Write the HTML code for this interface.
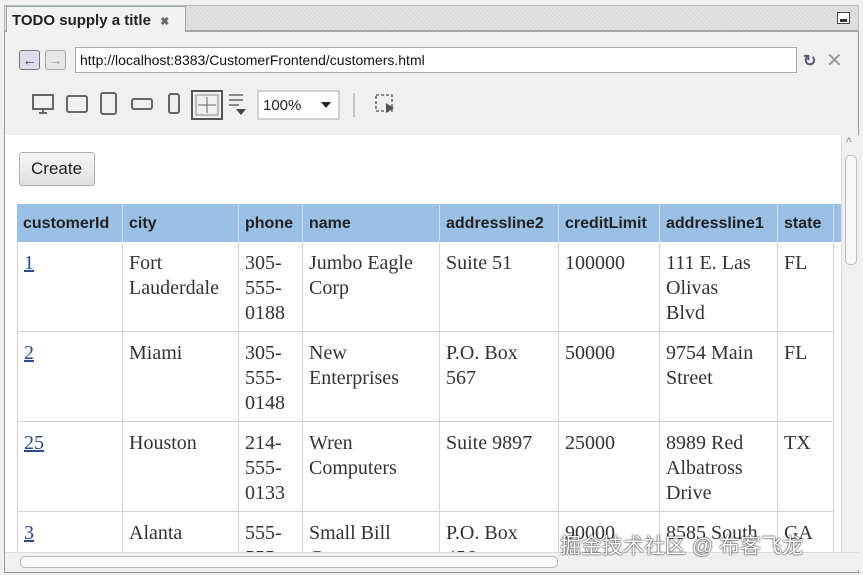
<!DOCTYPE html>
<html><head><meta charset="utf-8"><style>
*{box-sizing:border-box;margin:0;padding:0}
html{overflow:hidden;width:863px;height:575px}
body{width:863px;height:575px;overflow:hidden;background:#f0f0f0;position:relative;font-family:"Liberation Sans",sans-serif}
.abs{position:absolute}
.tabbar{left:4px;top:5px;width:855px;height:27px;background:repeating-linear-gradient(45deg,#d6d6d6 0 1px,#e2e2e2 1px 3px);border:1px solid #b8b8b8;border-bottom:2px solid #a8a8a8}
.tab{left:6px;top:6px;width:180px;height:26px;background:#f2f2f2;border:1px solid #9aa;border-bottom:none;font-weight:bold;font-size:15px;padding:5px 0 0 5px;color:#222}
.frame{left:4px;top:32px;width:855px;height:541px;border:1px solid #9a9a9a;border-top:none}
.url{left:75px;top:47px;width:722px;height:26px;background:#fff;border:1px solid #aaa;font-size:14px;padding:4px 0 0 4px;color:#111}
.content{left:5px;top:135px;width:836px;height:417px;background:#fff;overflow:hidden}
.btn{left:19px;top:152px;width:76px;height:34px;border:1px solid #b0b0b0;border-radius:3px;background:linear-gradient(#f6f6f6,#e0e0e0);font-size:17px;padding:6px 0 0 11px;color:#222}
.c{position:absolute;border-right:1px solid #d4d4d4;border-bottom:1px solid #d4d4d4;font-family:"Liberation Serif",serif;font-size:20px;line-height:25px;padding:9px 0 0 6px;color:#333;overflow:hidden;background:#fff}
.h{position:absolute;background:#9ac0e6;border-right:1px solid #cfdff0;height:38px;top:204px;font-weight:bold;font-size:16px;color:#222;padding:11px 0 0 6px}
a{color:#2a4a8a;text-decoration:underline}
.vs{left:841px;top:135px;width:18px;height:417px;background:#f0f0f0;border-left:1px solid #ddd}
.hs{left:5px;top:552px;width:854px;height:18px;background:#f0f0f0;border-top:1px solid #ddd}
</style></head><body>
<div class="abs tabbar"></div>
<div class="abs tab">TODO supply a title <span style="font-size:11px;color:#666;margin-left:5px">✖</span></div>
<div class="abs" style="left:837px;top:12px;width:13px;height:12px;border:1px solid #444;background:#fff"><div style="margin:6px 2px 0;height:3px;background:#333"></div></div>
<div class="abs frame"></div>
<div class="abs" style="left:19px;top:50px;width:21px;height:20px;border:1px solid #777;border-radius:3px;background:#dde;font-size:14px;text-align:center;line-height:18px;color:#335">←</div>
<div class="abs" style="left:45px;top:50px;width:21px;height:20px;border:1px solid #aaa;border-radius:3px;background:#e6e6e6;font-size:14px;text-align:center;line-height:18px;color:#999">→</div>
<div class="abs url">http://localhost:8383/CustomerFrontend/customers.html</div>
<div class="abs" style="left:803px;top:51px;font-size:16px;color:#557;font-weight:bold">↻</div>
<div class="abs" style="left:826px;top:48px;font-size:20px;color:#999">✕</div>
<svg class="abs" style="left:30px;top:90px" width="370" height="32" fill="none" stroke="#666" stroke-width="2">
<rect x="3" y="5" width="20" height="14"/><path d="M9 23h8M13 19v4"/>
<rect x="37" y="6" width="20" height="16" rx="2"/>
<rect x="71" y="3" width="15" height="21" rx="2"/>
<rect x="102" y="9" width="20" height="10" rx="2"/>
<rect x="139" y="4" width="10" height="19" rx="2"/>
<rect x="162" y="1" width="30" height="28" stroke="#555"/><rect x="166" y="5" width="22" height="20" stroke="#888" stroke-width="1"/><path d="M177 7v16M168 15h18" stroke-width="1"/>
<path d="M199 5h14M199 10h14M199 15h10" stroke-width="1.5"/><path d="M206 19h10l-5 6z" fill="#444" stroke="none"/>
<rect x="228" y="1" width="81" height="28" fill="#fff" stroke="#aaa" stroke-width="1"/>
<text x="233" y="20" font-family="Liberation Sans" font-size="15" fill="#222" stroke="none">100%</text>
<path d="M291 12h10l-5 6z" fill="#222" stroke="none"/>
<path d="M324 3v24" stroke="#999" stroke-width="1"/>
<rect x="346" y="5" width="16" height="16" stroke-dasharray="3 2" stroke-width="1.5"/><path d="M356 13l8 5-8 5z" fill="#555" stroke="none"/>
</svg>
<div class="abs content">
<div class="abs btn" style="left:14px;top:17px">Create</div>
</div>
<div class="abs" style="left:5px;top:135px;width:836px;height:417px;overflow:hidden">
<div style="position:absolute;left:-5px;top:-135px;width:860px;height:552px;overflow:hidden">
<div class="h" style="left:17px;width:106px">customerId</div>
<div class="h" style="left:123px;width:116px">city</div>
<div class="h" style="left:239px;width:64px">phone</div>
<div class="h" style="left:303px;width:137px">name</div>
<div class="h" style="left:440px;width:119px">addressline2</div>
<div class="h" style="left:559px;width:101px">creditLimit</div>
<div class="h" style="left:660px;width:118px">addressline1</div>
<div class="h" style="left:778px;width:56px">state</div>
<div class="h" style="left:834px;width:20px"></div>

<div class="c" style="left:17px;top:242px;width:106px;height:90px;border-left:1px solid #d4d4d4"><a>1</a></div>
<div class="c" style="left:123px;top:242px;width:116px;height:90px">Fort Lauderdale</div>
<div class="c" style="left:239px;top:242px;width:64px;height:90px">305-<br>555-<br>0188</div>
<div class="c" style="left:303px;top:242px;width:137px;height:90px">Jumbo Eagle<br>Corp</div>
<div class="c" style="left:440px;top:242px;width:119px;height:90px">Suite 51</div>
<div class="c" style="left:559px;top:242px;width:101px;height:90px">100000</div>
<div class="c" style="left:660px;top:242px;width:118px;height:90px">111 E. Las<br>Olivas<br>Blvd</div>
<div class="c" style="left:778px;top:242px;width:56px;height:90px">FL</div>

<div class="c" style="left:17px;top:332px;width:106px;height:90px;border-left:1px solid #d4d4d4"><a>2</a></div>
<div class="c" style="left:123px;top:332px;width:116px;height:90px">Miami</div>
<div class="c" style="left:239px;top:332px;width:64px;height:90px">305-<br>555-<br>0148</div>
<div class="c" style="left:303px;top:332px;width:137px;height:90px">New<br>Enterprises</div>
<div class="c" style="left:440px;top:332px;width:119px;height:90px">P.O. Box<br>567</div>
<div class="c" style="left:559px;top:332px;width:101px;height:90px">50000</div>
<div class="c" style="left:660px;top:332px;width:118px;height:90px">9754 Main<br>Street</div>
<div class="c" style="left:778px;top:332px;width:56px;height:90px">FL</div>

<div class="c" style="left:17px;top:422px;width:106px;height:90px;border-left:1px solid #d4d4d4"><a>25</a></div>
<div class="c" style="left:123px;top:422px;width:116px;height:90px">Houston</div>
<div class="c" style="left:239px;top:422px;width:64px;height:90px">214-<br>555-<br>0133</div>
<div class="c" style="left:303px;top:422px;width:137px;height:90px">Wren<br>Computers</div>
<div class="c" style="left:440px;top:422px;width:119px;height:90px">Suite 9897</div>
<div class="c" style="left:559px;top:422px;width:101px;height:90px">25000</div>
<div class="c" style="left:660px;top:422px;width:118px;height:90px">8989 Red<br>Albatross<br>Drive</div>
<div class="c" style="left:778px;top:422px;width:56px;height:90px">TX</div>

<div class="c" style="left:17px;top:512px;width:106px;height:90px;border-left:1px solid #d4d4d4"><a>3</a></div>
<div class="c" style="left:123px;top:512px;width:116px;height:90px">Alanta</div>
<div class="c" style="left:239px;top:512px;width:64px;height:90px">555-<br>555-</div>
<div class="c" style="left:303px;top:512px;width:137px;height:90px">Small Bill<br>Co</div>
<div class="c" style="left:440px;top:512px;width:119px;height:90px">P.O. Box<br>456</div>
<div class="c" style="left:559px;top:512px;width:101px;height:90px">90000</div>
<div class="c" style="left:660px;top:512px;width:118px;height:90px">8585 South</div>
<div class="c" style="left:778px;top:512px;width:56px;height:90px">GA</div>
</div></div>
<div class="abs vs"><div style="position:absolute;left:3px;top:20px;width:12px;height:110px;border:1px solid #bbb;border-radius:5px;background:#f8f8f8"></div><div style="position:absolute;left:4px;top:0;font-size:12px;color:#888">^</div></div>
<div class="abs hs"><div style="position:absolute;left:15px;top:3px;width:538px;height:12px;border:1px solid #bbb;border-radius:5px;background:#f8f8f8"></div></div>
<div class="abs" style="left:560px;top:530px;font-family:'Liberation Sans','Noto Sans CJK SC',sans-serif;font-size:21px;color:#fff;text-shadow:0 0 2px #333,0 0 1px #000">掘金技术社区 @ 布客飞龙</div>
</body></html>
